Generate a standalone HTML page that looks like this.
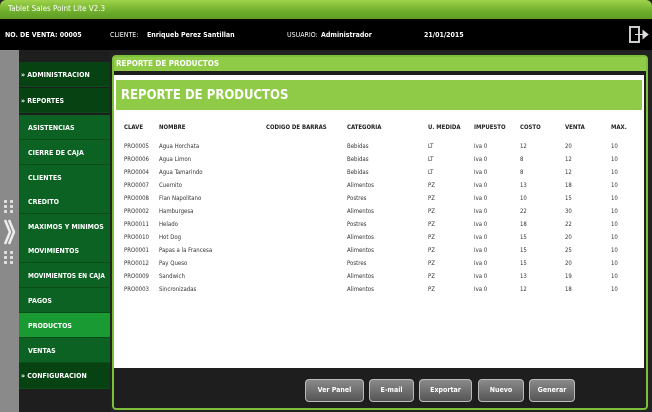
<!DOCTYPE html><html><head><style>
*{margin:0;padding:0;box-sizing:border-box}
body{width:652px;height:412px;overflow:hidden;background:#222;font-family:"DejaVu Sans Condensed","Liberation Sans",sans-serif;position:relative}
.a{position:absolute}
.title{left:0;top:0;width:652px;height:19px;background:linear-gradient(#9ed24a,#6fae2c 60%,#5f9a26);border-radius:6px 6px 0 0;color:#fff;font-size:8px;padding:4px 8px}
.hdr{left:0;top:19px;width:652px;height:31px;background:#000;color:#fff;font-size:7px;font-weight:bold}
.hdr span{position:absolute;top:12px}
.gray{left:0;top:50px;width:19px;height:362px;background:#8a8a8a}
.sb{left:19px;top:50px;width:91px;height:362px;background:#1e1e1e}
.it{position:absolute;left:19px;width:91px;height:25px;color:#fff;font-size:7px;font-weight:bold;padding:9px 0 0 9px;border-bottom:1px solid #0a4d18}
.h{background:#064212;padding-left:2px}
.s{background:#0b6222}
.sel{background:#199a32}
.pnl{left:112px;top:55px;width:536px;height:355px;border:2px solid #7cbf3a;border-radius:4px;background:#1e1e1e}
.pt{left:114px;top:57px;width:532px;height:14px;background:#8fcb46;color:#fff;font-size:8px;font-weight:bold;padding:2px 2px}
.wh{left:114px;top:75px;width:530px;height:293px;background:#fff}
.ban{left:116px;top:80px;width:526px;height:30px;background:#8fcb46;color:#fff;font-size:13px;font-weight:bold;padding:8px 5px}
table{position:absolute;left:120px;top:121px;border-collapse:collapse;font-size:6px;color:#333}
td{height:13px;padding:0 4px;white-space:nowrap}
tr.hd td{font-weight:bold;padding-bottom:6px;height:19px;color:#222}
.btn{position:absolute;top:379px;height:23px;border:1px solid #bbb;border-radius:4px;background:linear-gradient(#8a8a8a,#555);color:#fff;font-size:7px;font-weight:bold;text-align:center;line-height:21px}
</style></head><body>
<div class="a title">Tablet Sales Point Lite V2.3</div>
<div class="a hdr"><span style="left:5px">NO. DE VENTA: 00005</span><span style="left:110px;font-weight:normal">CLIENTE:</span><span style="left:147px">Enriqueb Perez Santillan</span><span style="left:287px;font-weight:normal">USUARIO:</span><span style="left:321px">Administrador</span><span style="left:424px">21/01/2015</span>
<svg style="position:absolute;left:629px;top:7px" width="20" height="17"><rect x="1" y="1" width="9" height="15" fill="none" stroke="#ccc" stroke-width="2"/><path d="M6 8.5h8v-4l5 4-5 4v-4" fill="#ddd" stroke="#ddd"/></svg></div>
<div class="a gray"></div>
<svg class="a" style="left:3px;top:200px" width="14" height="66"><g fill="#ddd"><rect x="1" y="0" width="3" height="3"/><rect x="7" y="0" width="3" height="3"/><rect x="1" y="5" width="3" height="3"/><rect x="7" y="5" width="3" height="3"/><rect x="1" y="10" width="3" height="3"/><rect x="7" y="10" width="3" height="3"/><rect x="1" y="51" width="3" height="3"/><rect x="7" y="51" width="3" height="3"/><rect x="1" y="56" width="3" height="3"/><rect x="7" y="56" width="3" height="3"/><rect x="1" y="61" width="3" height="3"/><rect x="7" y="61" width="3" height="3"/></g><path d="M2 20l5 12-5 12M6 20l5 12-5 12" stroke="#eee" stroke-width="2.5" fill="none"/></svg>
<div class="a sb"></div>
<div class="it h" style="top:62px">» ADMINISTRACION</div>
<div class="it h" style="top:88px">» REPORTES</div>
<div class="it s" style="top:115px">ASISTENCIAS</div>
<div class="it s" style="top:140px">CIERRE DE CAJA</div>
<div class="it s" style="top:165px">CLIENTES</div>
<div class="it s" style="top:189px">CREDITO</div>
<div class="it s" style="top:214px">MAXIMOS Y MINIMOS</div>
<div class="it s" style="top:238px">MOVIMIENTOS</div>
<div class="it s" style="top:263px;font-size:6.6px">MOVIMIENTOS EN CAJA</div>
<div class="it s" style="top:288px">PAGOS</div>
<div class="it sel" style="top:313px">PRODUCTOS</div>
<div class="it s" style="top:338px">VENTAS</div>
<div class="it h" style="top:363px;height:26px">» CONFIGURACION</div>
<div class="a pnl"></div>
<div class="a pt">REPORTE DE PRODUCTOS</div>
<div class="a wh"></div>
<div class="a ban">REPORTE DE PRODUCTOS</div>
<table>
<tr class="hd"><td style="width:35px">CLAVE</td><td style="width:107px">NOMBRE</td><td style="width:81px">CODIGO DE BARRAS</td><td style="width:81px">CATEGORIA</td><td style="width:46px">U. MEDIDA</td><td style="width:46px">IMPUESTO</td><td style="width:45px">COSTO</td><td style="width:46px">VENTA</td><td>MAX.</td></tr>
<tr><td>PRO0005</td><td>Agua Horchata</td><td></td><td>Bebidas</td><td>LT</td><td>Iva 0</td><td>12</td><td>20</td><td>10</td></tr>
<tr><td>PRO0006</td><td>Agua Limon</td><td></td><td>Bebidas</td><td>LT</td><td>Iva 0</td><td>8</td><td>12</td><td>10</td></tr>
<tr><td>PRO0004</td><td>Agua Tamarindo</td><td></td><td>Bebidas</td><td>LT</td><td>Iva 0</td><td>8</td><td>12</td><td>10</td></tr>
<tr><td>PRO0007</td><td>Cuernito</td><td></td><td>Alimentos</td><td>PZ</td><td>Iva 0</td><td>13</td><td>18</td><td>10</td></tr>
<tr><td>PRO0008</td><td>Flan Napolitano</td><td></td><td>Postres</td><td>PZ</td><td>Iva 0</td><td>10</td><td>15</td><td>10</td></tr>
<tr><td>PRO0002</td><td>Hamburgesa</td><td></td><td>Alimentos</td><td>PZ</td><td>Iva 0</td><td>22</td><td>30</td><td>10</td></tr>
<tr><td>PRO0011</td><td>Helado</td><td></td><td>Postres</td><td>PZ</td><td>Iva 0</td><td>18</td><td>22</td><td>10</td></tr>
<tr><td>PRO0010</td><td>Hot Dog</td><td></td><td>Alimentos</td><td>PZ</td><td>Iva 0</td><td>15</td><td>20</td><td>10</td></tr>
<tr><td>PRO0001</td><td>Papas a la Francesa</td><td></td><td>Alimentos</td><td>PZ</td><td>Iva 0</td><td>15</td><td>25</td><td>10</td></tr>
<tr><td>PRO0012</td><td>Pay Queso</td><td></td><td>Postres</td><td>PZ</td><td>Iva 0</td><td>15</td><td>20</td><td>10</td></tr>
<tr><td>PRO0009</td><td>Sandwich</td><td></td><td>Alimentos</td><td>PZ</td><td>Iva 0</td><td>13</td><td>19</td><td>10</td></tr>
<tr><td>PRO0003</td><td>Sincronizadas</td><td></td><td>Alimentos</td><td>PZ</td><td>Iva 0</td><td>12</td><td>18</td><td>10</td></tr>
</table>
<div class="btn" style="left:305px;width:59px">Ver Panel</div>
<div class="btn" style="left:369px;width:45px">E-mail</div>
<div class="btn" style="left:419px;width:53px">Exportar</div>
<div class="btn" style="left:478px;width:46px">Nuevo</div>
<div class="btn" style="left:529px;width:46px">Generar</div>
</body></html>
